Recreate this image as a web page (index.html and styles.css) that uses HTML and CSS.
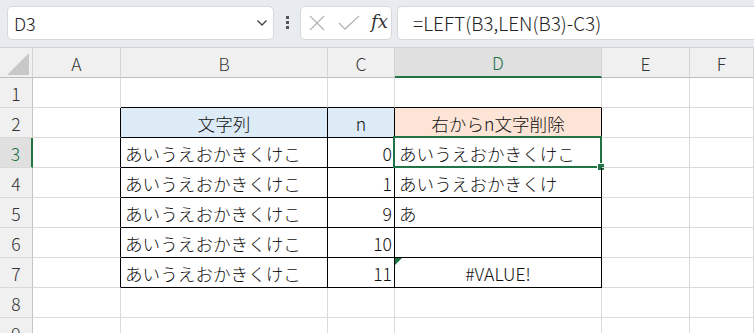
FILE: index.html
```html
<!DOCTYPE html>
<html lang="ja">
<head>
    <meta charset="UTF-8">
    <meta name="viewport" content="width=device-width, initial-scale=1.0">
    <title>LEFT LEN</title>
    <link rel="stylesheet" href="styles.css">
</head>
<body>
    <div class="formula-bar">
        <div class="name-box">
            <span class="name-text">D3</span>
            <svg class="chevron" width="12" height="8" viewBox="0 0 12 8"><path d="M1.5 1.5 L6 6 L10.5 1.5" fill="none" stroke="#444" stroke-width="1.3"/></svg>
        </div>
        <div class="dots"><span></span><span></span><span></span></div>
        <div class="fx-box">
            <svg width="18" height="18" viewBox="0 0 18 18"><path d="M2 2 L16 16 M16 2 L2 16" stroke="#b5b5b5" stroke-width="1.3"/></svg>
            <svg width="22" height="18" viewBox="0 0 22 18"><path d="M1 9 L7 15 L21 2" fill="none" stroke="#b5b5b5" stroke-width="1.3"/></svg>
            <span class="fx">fx</span>
        </div>
        <div class="formula-input">=LEFT(B3,LEN(B3)-C3)</div>
    </div>

    <div class="sheet">
        <div class="corner"><span class="corner-tri"></span></div>
        <div class="col-head">A</div>
        <div class="col-head">B</div>
        <div class="col-head">C</div>
        <div class="col-head selected">D</div>
        <div class="col-head">E</div>
        <div class="col-head">F</div>

        <div class="row-head">1</div>
        <div class="cell"></div>
        <div class="cell edge-bottom"></div>
        <div class="cell edge-bottom"></div>
        <div class="cell edge-bottom"></div>
        <div class="cell"></div>
        <div class="cell"></div>

        <div class="row-head">2</div>
        <div class="cell edge-right"></div>
        <div class="cell box head-blue center">文字列</div>
        <div class="cell box head-blue center">n</div>
        <div class="cell box head-orange center">右からn文字削除</div>
        <div class="cell"></div>
        <div class="cell"></div>

        <div class="row-head selected">3</div>
        <div class="cell edge-right"></div>
        <div class="cell box">あいうえおかきくけこ</div>
        <div class="cell box num">0</div>
        <div class="cell box active">あいうえおかきくけこ<span class="sel"></span><span class="handle"></span></div>
        <div class="cell"></div>
        <div class="cell"></div>

        <div class="row-head">4</div>
        <div class="cell edge-right"></div>
        <div class="cell box">あいうえおかきくけこ</div>
        <div class="cell box num">1</div>
        <div class="cell box">あいうえおかきくけ</div>
        <div class="cell"></div>
        <div class="cell"></div>

        <div class="row-head">5</div>
        <div class="cell edge-right"></div>
        <div class="cell box">あいうえおかきくけこ</div>
        <div class="cell box num">9</div>
        <div class="cell box">あ</div>
        <div class="cell"></div>
        <div class="cell"></div>

        <div class="row-head">6</div>
        <div class="cell edge-right"></div>
        <div class="cell box">あいうえおかきくけこ</div>
        <div class="cell box num">10</div>
        <div class="cell box"></div>
        <div class="cell"></div>
        <div class="cell"></div>

        <div class="row-head">7</div>
        <div class="cell edge-right"></div>
        <div class="cell box">あいうえおかきくけこ</div>
        <div class="cell box num">11</div>
        <div class="cell box center">#VALUE!<span class="err-tri"></span></div>
        <div class="cell"></div>
        <div class="cell"></div>

        <div class="row-head">8</div>
        <div class="cell"></div>
        <div class="cell"></div>
        <div class="cell"></div>
        <div class="cell"></div>
        <div class="cell"></div>
        <div class="cell"></div>

        <div class="row-head">9</div>
        <div class="cell"></div>
        <div class="cell"></div>
        <div class="cell"></div>
        <div class="cell"></div>
        <div class="cell"></div>
        <div class="cell"></div>
    </div>
</body>
</html>
```

FILE: styles.css
```css
body {
    margin: 0;
    font-family: "Noto Sans CJK JP", "Noto Sans", sans-serif;
    background: #fff;
    overflow: hidden;
}

.formula-bar {
    height: 48px;
    box-sizing: border-box;
    background: #e8ebf0;
    border-bottom: 1px solid #d2d4d8;
    display: flex;
    align-items: center;
    padding: 0 0 2px 7px;
}

.name-box {
    width: 267px;
    height: 34px;
    box-sizing: border-box;
    background: #fff;
    border: 1px solid #d6d8dc;
    border-radius: 5px;
    display: flex;
    align-items: center;
    justify-content: space-between;
    padding: 0 5px 0 6px;
}

.name-text {
    font-size: 18px;
    font-weight: 300;
    color: #222;
}

.chevron {
    margin-top: 1px;
}

.dots {
    width: 26px;
    display: flex;
    flex-direction: column;
    align-items: center;
    gap: 2px;
}

.dots span {
    width: 3px;
    height: 3px;
    background: #555;
}

.fx-box {
    width: 92px;
    height: 34px;
    box-sizing: border-box;
    background: #fff;
    border: 1px solid #d6d8dc;
    border-radius: 5px;
    display: flex;
    align-items: center;
    gap: 12px;
    padding-left: 7px;
}

.fx {
    font-family: "DejaVu Serif", "Liberation Serif", serif;
    font-style: italic;
    font-size: 18px;
    color: #333;
    margin-left: -1px;
    padding-bottom: 2px;
}

.formula-input {
    flex: 1;
    height: 34px;
    margin-left: 5px;
    box-sizing: border-box;
    background: #fff;
    border: 1px solid #d6d8dc;
    border-right: none;
    border-radius: 5px 0 0 5px;
    display: flex;
    align-items: center;
    padding-left: 15px;
    font-size: 19px;
    font-weight: 300;
    color: #222;
}

.sheet {
    display: grid;
    grid-template-columns: 33px 88px 207px 67px 207px 88px 64px;
    grid-template-rows: 30px;
    grid-auto-rows: 30px;
}

.corner,
.col-head,
.row-head {
    background: #f0f0f0;
    box-sizing: border-box;
    border-right: 1px solid #d4d4d4;
    border-bottom: 1px solid #bdbdbd;
    display: flex;
    align-items: center;
    justify-content: center;
    font-size: 17.5px;
    font-weight: 300;
    color: #333;
    padding-top: 1px;
}

.corner {
    position: relative;
    border-right: 1px solid #d4d4d4;
}

.corner-tri {
    position: absolute;
    right: 3px;
    bottom: 2px;
    width: 0;
    height: 0;
    border-left: 22px solid transparent;
    border-bottom: 22px solid #c8c8c8;
}

.col-head.selected {
    background: #e0e0e0;
    color: #217346;
    border-bottom: 2px solid #217346;
}

.row-head {
    border-right: 1px solid #c4c4c4;
    border-bottom: 1px solid #d8d8d8;
}

.row-head.selected {
    background: #e0e0e0;
    color: #217346;
    border-right: 2px solid #217346;
}

.cell {
    position: relative;
    box-sizing: border-box;
    border-right: 1px solid #dadada;
    border-bottom: 1px solid #dadada;
    display: flex;
    align-items: center;
    padding: 2px 4px 0;
    font-size: 17.6px;
    font-weight: 300;
    color: #111;
    white-space: nowrap;
}

.cell.edge-bottom {
    border-bottom-color: #000;
}

.cell.edge-right {
    border-right-color: #000;
}

.cell.box {
    border-right-color: #000;
    border-bottom-color: #000;
}

.head-blue {
    background: #ddebf7;
}

.head-orange {
    background: #fce4d6;
}

.center {
    justify-content: center;
}

.num {
    justify-content: flex-end;
    padding-right: 2px;
}

.sel {
    position: absolute;
    top: -2px;
    left: -2px;
    right: -1px;
    bottom: -1px;
    border: 2px solid #217346;
}

.handle {
    position: absolute;
    right: -4px;
    bottom: -4px;
    width: 6px;
    height: 6px;
    background: #217346;
    border: 1px solid #fff;
}

.err-tri {
    position: absolute;
    top: 0;
    left: 0;
    width: 0;
    height: 0;
    border-top: 7px solid #1e7145;
    border-right: 7px solid transparent;
}
```
